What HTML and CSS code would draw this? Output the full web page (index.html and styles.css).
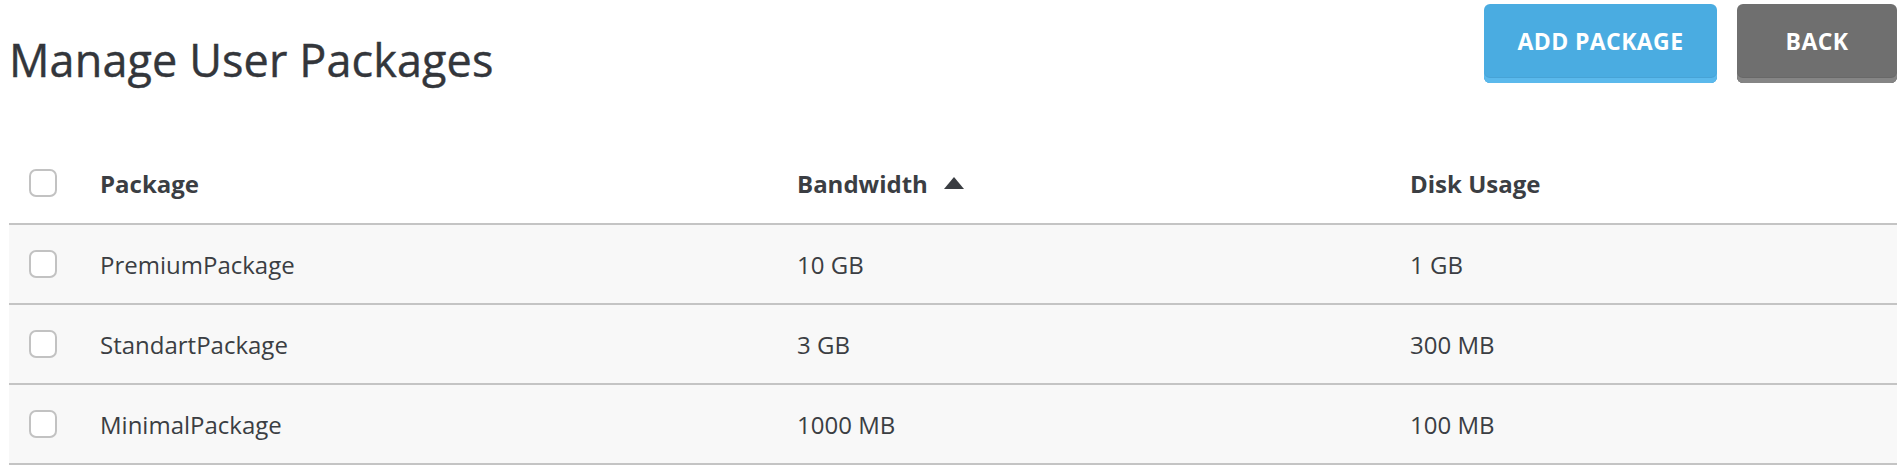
FILE: index.html
```html
<!DOCTYPE html>
<html>
<head>
<meta charset="utf-8">
<link rel="stylesheet" href="styles.css">
</head>
<body>
<div class="page">
  <div class="topbar">
    <h1 class="title">Manage User Packages</h1>
    <div class="actions">
      <button class="btn btn-blue">ADD PACKAGE</button>
      <button class="btn btn-gray">BACK</button>
    </div>
  </div>
  <div class="table">
    <div class="row head">
      <div class="cell chk"><span class="box"></span></div>
      <div class="cell">Package</div>
      <div class="cell">Bandwidth <svg class="sort" width="20" height="12" viewBox="0 0 20 12"><path d="M10 0 L20 12 L0 12 Z" fill="#3a3d42"/></svg></div>
      <div class="cell">Disk Usage</div>
    </div>
    <div class="row">
      <div class="cell chk"><span class="box"></span></div>
      <div class="cell">PremiumPackage</div>
      <div class="cell">10 GB</div>
      <div class="cell">1 GB</div>
    </div>
    <div class="row">
      <div class="cell chk"><span class="box"></span></div>
      <div class="cell">StandartPackage</div>
      <div class="cell">3 GB</div>
      <div class="cell">300 MB</div>
    </div>
    <div class="row">
      <div class="cell chk"><span class="box"></span></div>
      <div class="cell">MinimalPackage</div>
      <div class="cell">1000 MB</div>
      <div class="cell">100 MB</div>
    </div>
  </div>
</div>
</body>
</html>
```

FILE: styles.css
```css
* { box-sizing: border-box; }
html, body { margin: 0; padding: 0; background: #fff; }
body { font-family: "Open Sans", "Liberation Sans", sans-serif; color: #3b3e43; }
.page { padding: 4px 7px 0 9px; }
.topbar { display: flex; justify-content: space-between; align-items: flex-start; height: 139px; }
.title { margin: 0; font-size: 45px; font-weight: 400; color: #33363b; line-height: 1; padding-top: 33px; letter-spacing: 0.1px; -webkit-text-stroke: 0.4px #33363b; }
.actions { display: flex; gap: 20px; }
.btn {
  font-family: "Open Sans", "Liberation Sans", sans-serif;
  font-weight: 700; font-size: 23px; color: #fff;
  height: 79px; border: none; border-radius: 6px;
  padding: 0 0 5px 0; cursor: pointer; letter-spacing: 0.4px;
}
.btn-blue { width: 233px; background: #4aace1; box-shadow: inset 0 -5px 0 #5bb9ec, inset 0 -6px 0 #47a3d6; }
.btn-gray { width: 160px; background: #6f6f6f; box-shadow: inset 0 -5px 0 #858585, inset 0 -6px 0 #686868; }
.table { display: flex; flex-direction: column; }
.row {
  display: grid; grid-template-columns: 91px 697px 613px 1fr;
  height: 80px; align-items: center; background: #f8f8f8;
  border-bottom: 2px solid #c4c4c4; font-size: 24px;
}
.row.head { background: #fff; font-weight: 700; height: 82px; }
.cell { display: flex; align-items: center; }
.chk { padding-left: 20px; }
.box { width: 28px; height: 28px; border: 2px solid #c2c2c2; border-radius: 7px; background: #fff; display: block; }
.sort { margin-left: 16px; }
```
